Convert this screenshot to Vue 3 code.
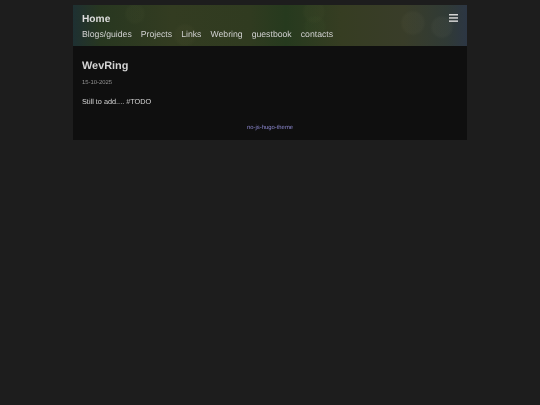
<script setup>
const links = ['Blogs/guides', 'Projects', 'Links', 'Webring', 'guestbook', 'contacts']
</script>

<template>
  <div class="page">
    <main class="sheet">
      <header class="head">
        <div class="title-row">
          <a class="home">Home</a>
          <svg class="burger" width="9" height="8" viewBox="0 0 9 8" aria-hidden="true">
            <rect x="0" y="0" width="9" height="1.5" fill="#d4d4d4" />
            <rect x="0" y="3.2" width="9" height="1.5" fill="#d4d4d4" />
            <rect x="0" y="6.4" width="9" height="1.5" fill="#d4d4d4" />
          </svg>
        </div>
        <nav class="nav">
          <a v-for="l in links" :key="l">{{ l }}</a>
        </nav>
      </header>
      <article class="body">
        <h1>WevRing</h1>
        <p class="date">15-10-2025</p>
        <p class="text">Still to add.... #TODO</p>
      </article>
      <footer class="foot"><a>no-js-hugo-theme</a></footer>
    </main>
  </div>
</template>

<style>
html, body { margin: 0; background: #1d1d1d; }
</style>

<style scoped>
.page {
  min-height: 405px;
  padding-top: 5px;
  box-sizing: border-box;
  background: #1d1d1d;
  font-family: "Liberation Sans", Arial, sans-serif;
  text-rendering: geometricPrecision;
}
.sheet {
  width: 394px;
  height: 135px;
  margin: 0 auto;
  background: #0f0f0f;
  display: flex;
  flex-direction: column;
  filter: blur(0.2px);
}
.head {
  height: 41px;
  box-sizing: border-box;
  padding: 7px 9px 0;
  background:
    radial-gradient(circle at 62px 9px, rgba(120,130,80,.05) 0 8px, transparent 11px),
    radial-gradient(circle at 112px 30px, rgba(130,120,80,.05) 0 9px, transparent 12px),
    radial-gradient(circle at 241px 7px, rgba(120,120,70,.05) 0 9px, transparent 12px),
    radial-gradient(circle at 242px 22px, rgba(90,140,70,.04) 0 9px, transparent 12px),
    radial-gradient(circle at 340px 18px, rgba(150,150,120,.05) 0 10px, transparent 13px),
    radial-gradient(circle at 369px 22px, rgba(150,150,130,.06) 0 9px, transparent 12px),
    linear-gradient(90deg, #1e3032 0%, #283720 7%, #333c21 25%, #303b20 45%, #263a1e 54%, #363d22 68%, #393d29 84%, #303a36 95%, #2c3644 100%);
}
.title-row {
  display: flex;
  justify-content: space-between;
  align-items: flex-start;
  padding-top: 1px;
}
.home {
  font-size: 10.2px;
  line-height: 13px;
  font-weight: 700;
  color: #dcdcdc;
}
.burger { margin-top: 1px; }
.nav {
  display: flex;
  gap: 9px;
  margin-top: 2px;
  font-size: 8.7px;
  line-height: 12px;
  color: #d0d0d0;
}
.body { padding: 13px 9px 0; flex: 1; }
h1 {
  margin: 0;
  font-size: 10.9px;
  line-height: 15px;
  font-weight: 700;
  color: #d4d4d4;
}
.date {
  margin: 6px 0 0;
  font-size: 5.9px;
  line-height: 7px;
  color: #949494;
}
.text {
  margin: 10px 0 0;
  font-size: 7.3px;
  line-height: 10px;
  color: #d4d4d4;
}
.foot {
  text-align: center;
  font-size: 5.9px;
  line-height: 7px;
  color: #8c88d0;
  padding-bottom: 8px;
}
</style>
